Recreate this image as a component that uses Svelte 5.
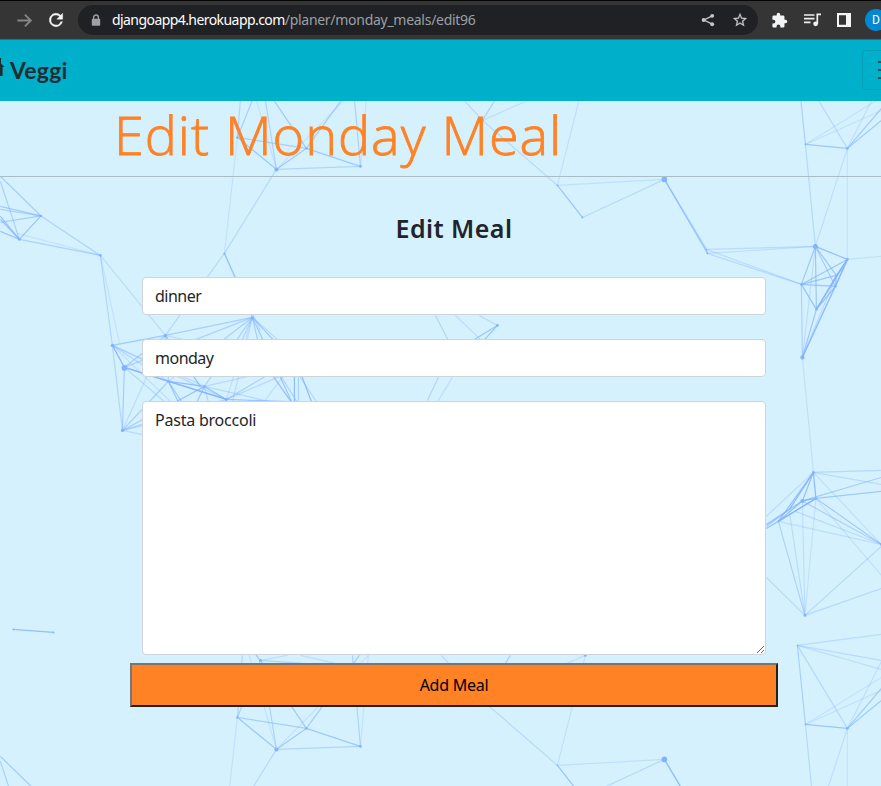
<script>
  // Each segment: x1, y1, x2, y2, opacity
  const mesh = [
    [237,137,276,169,.75],[237,137,306,148,.55],[276,169,306,148,.75],[306,148,360,166,.65],[276,169,360,166,.45],
    [237,137,224,253,.25],[276,169,224,253,.4],[306,148,260,80,.65],[306,148,359,75,.6],[276,169,243,55,.25],[276,169,265,100,.5],
    [276,169,368,75,.25],[360,166,352,75,.5],[360,166,368,75,.25],[237,137,242,75,.45],[237,137,260,80,.6],[260,80,255,74,.7],[260,80,302,83,.5],[260,80,287,75,.3],[300,75,335,83,.3],
    [441,75,482,120,.4],[482,120,510,75,.55],[482,120,585,75,.3],[585,75,557,185,.28],[482,120,557,185,.4],
    [557,185,664,179,.28],[557,185,582,217,.75],[582,217,664,179,.4],[664,179,706,249,.6],[664,179,707,253,.6],
    [706,249,707,253,.7],[706,249,815,246,.35],[707,253,815,246,.3],[706,249,801,284,.35],[707,253,801,284,.4],
    [797,65,805,144,.55],[805,144,815,246,.4],[797,65,847,148,.4],[805,144,847,148,.7],[847,148,815,246,.3],[847,148,847,259,.22],
    [847,148,881,108,.65],[847,148,881,120,.65],[847,148,881,81,.3],[805,144,881,97,.25],[805,144,881,110,.25],[797,65,881,54,.35],[797,65,881,80,.35],[797,65,881,89,.3],
    [847,259,881,256,.25],[815,246,847,259,.8],[815,246,801,284,.7],[815,246,836,275,.7],[815,246,835,286,.6],[815,246,816,309,.7],[815,246,802,357,.3],
    [847,259,801,284,.7],[847,259,836,275,.9],[847,259,835,286,.9],[847,259,816,309,.9],[847,259,802,357,.75],[801,284,836,275,.7],[801,284,835,286,.7],[801,284,816,309,.75],[801,284,802,357,.5],
    [816,309,802,357,.7],[816,309,836,275,.8],[816,309,835,286,.8],[835,286,836,275,.8],[835,286,802,357,.5],[836,275,802,357,.4],[802,357,813,472,.28],
    [813,472,881,470,.4],[813,472,881,484,.35],[813,472,815.5,498,.9],[813,472,802,500.5,.85],[813,472,778,521,.8],[813,472,789,509,.9],[813,472,766,516,.35],[813,472,881,544,.3],
    [815.5,498,881,544,.65],[815.5,498,881,575,.28],[802,500.5,881,544,.55],[795,511,881,544,.35],[778,521,881,544,.3],[802,500.5,881,477,.6],[815.5,498,881,491,.65],[815.5,498,802,500.5,.9],
    [815.5,498,778,521,.9],[802,500.5,778,521,.85],[802,500.5,766,524,.8],[815.5,498,766,528,.8],[789,509,766,526,.7],
    [804.5,615,778,521,.5],[804.5,615,789,511,.35],[804.5,615,802,500,.3],[804.5,615,815.5,498,.25],[804.5,615,881,546,.4],[804.5,615,881,588,.4],[804.5,615,766,577,.4],
    [40.5,215.5,0,176,.65],[40.5,215.5,0,206,.6],[40.5,215.5,0,209,.5],[40.5,215.5,0,222,.55],[40.5,215.5,19,239,.75],[40.5,215.5,100,255,.5],
    [19,239,0,181,.55],[19,239,0,216,.8],[19,239,0,219,.8],[19,239,0,231,.7],[19,239,100,255,.5],[17,233,100,255,.22],
    [100,255,112,345,.45],[100,255,119,343,.25],[100,255,165,335,.35],[224,253,165,335,.4],[224,253,252,317,.65],[224,253,260,330,.4],
    [112,345,165,335,.65],[165,335,252,317,.55],[112,345,124,367,.9],[112,345,122,430,.45],[112,345,168,381,.45],[112,345,204,386,.35],[112,345,200,430,.3],[112,345,226,399,.4],
    [124,367,122,430,.6],[124,367,165,335,.7],[124,367,168,381,.8],[124,367,226,399,.75],[124,367,180,415,.45],[124,367,252,317,.5],[165,335,168,381,.6],[165,335,122,430,.35],[165,335,200,386,.8],[165,335,275,360,.3],
    [122,430,168,381,.6],[122,430,204,386,.6],[122,430,252,400,.35],[122,430,160,438,.35],[122,430,226,399,.5],
    [168,381,204,386,.8],[168,381,226,399,.8],[168,381,182,410,.7],[168,381,190,415,.6],[168,381,252,317,.4],
    [204,386,226,399,.8],[204,386,190,415,.75],[204,386,210,410,.45],[204,386,294,407,.4],[204,386,165,407,.3],[204,386,252,317,.5],[204,386,275,370,.4],
    [226,399,252,317,.3],[226,399,275,370,.55],[226,399,310,402,.7],[226,399,284,374,.4],[226,399,220,412,.6],
    [252,317,204,355,.3],[252,317,230,365,.5],[252,317,262,360,.6],[252,317,294,407,.7],[252,317,310,368,.4],[252,317,230,410,.35],[252,317,280,347,.7],
    [280,347,335,430,.4],[270,372,294,406,.8],[278,372,302,410,.5],[294,370,294,402,.9],[298,370,298,402,.5],[300,372,312,404,.9],[284,374,261,405,.3],
    [435,315,448,340,.45],[455,315,481,340,.35],[479,315,497,325,.4],[497,325,474,339,.7],[497,325,479,345,.75],[438,377,427,400,.45],[452,377,435,405,.3],
    [13,629,53,632,.8]
  ];
  const dots = [
    [237,137,1.2],[276,169,2],[306,148,1.2],[360,166,1.4],[482,120,1.2],[585,75,1.4],[557,185,.8],[582,217,1],[664,179,2.8],[706,249,.7],[707,253,.8],
    [797,65,.8],[805,144,.8],[847,148,1.3],[815,246,2.5],[847,259,1.4],[801,284,1.2],[836,275,1],[835,286,1.2],[816,309,1.2],[802,357,2.1],
    [813,472,1.4],[802,500.5,2],[815.5,498,1.2],[778,521,1],[881,544,1.4],[804.5,615,1.4],[40.5,215.5,1.2],[19,239,1.4],[100,255,1.3],[224,253,1],
    [112,345,1.7],[124,367.5,2.8],[122,430,1.6],[165,335,1.6],[252,317.5,1.6],[168,381,1.3],[204,386,1.2],[226,399,1.5],[497,325,1.4],[13,629,1],[53,632,1],[260,80,1.4]
  ];
</script>

<div class="page">
  <header class="browser">
    <svg class="ic fwd" viewBox="0 0 24 24"><path d="M3 12h17M12.500 4.500l7.500 7.500-7.500 7.500" fill="none" stroke="#858587" stroke-width="2.300"/></svg>
    <svg class="ic reload" viewBox="0 0 24 24"><path fill="#f5f6f7" stroke="#f5f6f7" stroke-width=".5" d="M17.65 6.35A8 8 0 1 0 19.73 14h-2.08A6 6 0 1 1 12 6c1.66 0 3.14.69 4.22 1.78L13 11h7V4z"/></svg>
    <div class="omni">
      <svg class="lock" viewBox="0 0 10 13"><path d="M2.6 5V3.4a2.4 2.4 0 0 1 4.8 0V5" fill="none" stroke="#9aa0a6" stroke-width="1.4"/><rect x=".8" y="4.7" width="8.4" height="7" rx="1" fill="#9aa0a6"/></svg>
      <span class="url"><b>djangoapp4.herokuapp.com</b><i>/planer/monday_meals/edit96</i></span>
      <svg class="share" viewBox="0 0 16 16"><path d="M13 3.300L3.200 8l9.800 4.700" fill="none" stroke="#c4c7ca" stroke-width="1.500"/><g fill="#c4c7ca"><circle cx="12.800" cy="3.200" r="2.200"/><circle cx="3" cy="8" r="2.200"/><circle cx="12.800" cy="12.800" r="2.200"/></g></svg>
      <svg class="star" viewBox="2 2 20 20"><path fill="#c4c7ca" stroke="#c4c7ca" stroke-width=".3" d="m22 9.24-7.19-.62L12 2 9.19 8.63 2 9.24l5.46 4.73L5.82 21 12 17.27 18.18 21l-1.63-7.03L22 9.24zM12 15.4l-3.76 2.27 1-4.28-3.32-2.88 4.38-.38L12 6.1l1.71 4.04 4.38.38-3.32 2.88 1 4.28L12 15.4z"/></svg>
    </div>
    <svg class="ic ext" viewBox="0 0 24 24"><path fill="#f3f4f5" d="M20.5 11H19V7c0-1.1-.9-2-2-2h-4V3.500a2.500 2.500 0 0 0-5 0V5H4c-1.100 0-1.990.9-1.990 2v3.800H3.500a2.700 2.700 0 0 1 0 5.400H2V20c0 1.100.9 2 2 2h3.800v-1.500a2.700 2.700 0 0 1 5.400 0V22H17c1.100 0 2-.9 2-2v-4h1.500a2.500 2.500 0 0 0 0-5z"/></svg>
    <svg class="queue" viewBox="0 0 17 14"><path d="M0 2h10.500M0 5.700h10.500M0 9.400h6.500M13.300 11V1.300H17" fill="none" stroke="#eceef0" stroke-width="1.7"/><circle cx="11.600" cy="10.800" r="2.400" fill="#eceef0"/></svg>
    <svg class="panel" viewBox="0 0 14 14"><path fill="#f3f4f5" fill-rule="evenodd" d="M0 0h14v14H0zM2 2.200v9.600h7V2.200z"/></svg>
    <span class="avatar">D</span>
  </header>

  <nav>
    <svg class="leaf" viewBox="0 0 5 22"><path d="M0 1h1v5.500l3.500 3.500H2.600v9H0z" fill="#212c32"/></svg>
    <span class="brand">Veggi</span>
    <button class="toggler" aria-label="Menu"><i></i><i></i><i></i></button>
  </nav>

  <main>
    <svg class="mesh" width="881" height="685" viewBox="0 101 881 685" aria-hidden="true">
      {#each [0, 580] as shift}
        <g transform="translate(0.4 {shift + 0.4})" stroke="#82b3ff" stroke-width="1.15">
          {#each mesh as [a, b, c, d, o]}
            <line x1={a} y1={b} x2={c} y2={d} opacity={o} />
          {/each}
          {#each dots as [x, y, r]}
            <circle cx={x} cy={y} {r} fill="#82b3ff" stroke="none" />
          {/each}
        </g>
      {/each}
    </svg>
    <h1><span>Edit Monday Meal</span></h1>
    <form>
      <h2><span>Edit Meal</span></h2>
      <input type="text" value="dinner" />
      <input type="text" value="monday" class="second" />
      <textarea spellcheck="false">Pasta broccoli</textarea>
      <button type="button" class="add">Add Meal</button>
    </form>
  </main>
</div>

<style>
  .page { width: 881px; height: 786px; overflow: hidden; display: flex; flex-direction: column; font-family: "Noto Sans", "Open Sans", sans-serif; color: #212529; }
  .page * { box-sizing: border-box; }
  svg { display: block; flex: none; }
  .browser { height: 40px; flex: none; display: flex; align-items: center; background: #353535; border-top: 1px solid #050505; border-bottom: 1px solid #5b5b5b; padding-left: 15px; }
  .fwd { width: 19px; height: 19px; margin-right: 12px; }
  .reload { width: 20px; height: 20px; margin-right: 12px; }
  .omni { width: 680px; height: 30px; border-radius: 15px; background: #202124; display: flex; align-items: center; padding: 0 11px 0 13px; flex: none; }
  .lock { width: 10px; height: 13px; }
  .url { margin-left: 11px; flex: 1; font-size: 14px; line-height: 20px; white-space: nowrap; }
  .url b { font-weight: 400; color: #fff; display: inline-block; letter-spacing: -0.57px; }
  .url i { font-style: normal; color: #9aa0a6; letter-spacing: -0.28px; }
  .share { width: 14px; height: 14px; margin-right: 18px; }
  .star { width: 14px; height: 14px; }
  .ext { width: 17px; height: 17px; margin-left: 13px; }
  .queue { width: 17px; height: 14px; margin-left: 16px; }
  .panel { width: 14px; height: 14px; margin-left: 16px; }
  .avatar { width: 22px; height: 22px; flex: none; margin-left: 14px; border-radius: 50%; background: #0288d1; color: #fff; font: 12px/22px Roboto, sans-serif; text-align: center; }
  nav { height: 61px; flex: none; display: flex; align-items: center; background: #00b0ca; }
  .leaf { width: 5px; height: 22px; margin-top: -5px; }
  .brand { margin: -2px 0 0 5px; flex: 1; font: 700 23px/30px Lato, sans-serif; letter-spacing: 0.2px; color: #212c32; }
  .toggler { width: 56px; height: 40px; margin: -1px -37px 0 0; flex: none; border: 1px solid #079eb5; border-radius: 4px; background: none; padding: 0 0 0 15px; display: flex; flex-direction: column; justify-content: center; gap: 6px; }
  .toggler i { width: 24px; height: 2px; background: #0a4f5a; }
  main { flex: 1; position: relative; background: #d6f1fe; }
  .mesh { position: absolute; inset: 0; }
  h1 { position: relative; margin: 0; height: 76px; border-bottom: 1px solid #a9bdc7; padding-left: 114px; font: 300 54px/66px "Open Sans", sans-serif; color: #ff8225; white-space: nowrap; }
  h1 span { letter-spacing: 0.95px; -webkit-text-stroke: 0.8px #ff8225; }
  form { position: relative; width: 648px; margin-left: 130px; padding: 0 12px; display: flex; flex-direction: column; }
  h2 { margin: 33px 0 0; height: 67px; text-align: center; font: 600 25px/36px "Noto Sans", sans-serif; letter-spacing: 0.45px; }
  input, textarea { width: 624px; border: 1px solid #ced4da; border-radius: 4px; background: #fff; color: #212529; padding: 6px 12px; font: 16px/24px "Noto Sans", sans-serif; letter-spacing: -0.5px; outline: none; display: block; }
  input { height: 38px; }
  .second { margin: 24px 0; }
  textarea { height: 254px; resize: vertical; letter-spacing: -0.22px; }
  .add { margin: 8px -12px 0; height: 44px; border: 2px solid; border-color: #767676 #212121 #212121 #767676; background: #ff8225; color: #000; font: 16px/24px "Noto Sans", sans-serif; letter-spacing: -0.25px; padding: 0; }
</style>
